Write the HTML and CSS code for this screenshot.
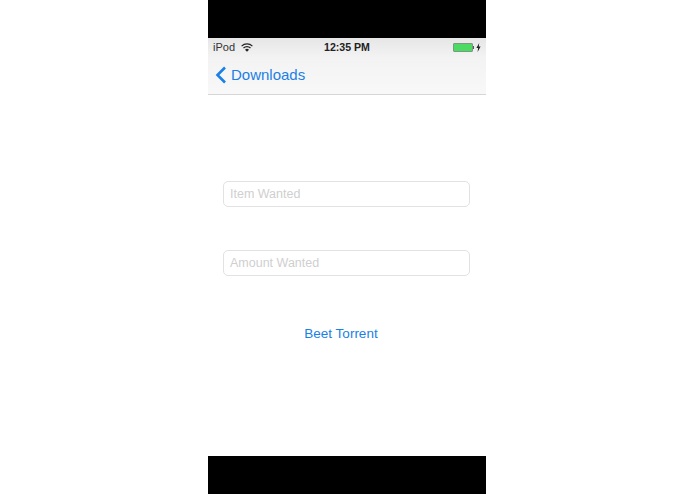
FILE: index.html
```html
<!DOCTYPE html>
<html lang="en">
<head>
  <meta charset="UTF-8" />
  <title>Beet Torrent</title>
  <link rel="stylesheet" href="styles.css">
</head>
<body>
  <div class="phone">
    <div class="letterbox"></div>
    <div class="screen">
      <div class="top-bar">
        <div class="status-bar">
          <div class="status-left">
            <span>iPod</span>
            <svg class="wifi" width="12" height="9" viewBox="0 0 12 9">
              <path d="M0.6 3.1 A7.6 7.6 0 0 1 11.4 3.1" fill="none" stroke="#222" stroke-width="1.2"/>
              <path d="M2.5 5 A4.9 4.9 0 0 1 9.5 5" fill="none" stroke="#222" stroke-width="1.2"/>
              <path d="M6 8.8 L4 6.7 A2.9 2.9 0 0 1 8 6.7 Z" fill="#222"/>
            </svg>
          </div>
          <div class="status-time">12:35 PM</div>
          <div class="status-right">
            <div class="battery"><div class="battery-fill"></div></div>
            <div class="battery-tip"></div>
            <svg class="bolt" width="5" height="9" viewBox="0 0 5 9">
              <path d="M3.2 0 L0.4 5 H2.1 L1.6 9 L4.6 3.6 H2.8 Z" fill="#222"/>
            </svg>
          </div>
        </div>
        <div class="nav-bar">
          <svg class="back-icon" width="12" height="18" viewBox="0 0 12 18">
            <path d="M10 1.5 L2.5 9 L10 16.5" fill="none" stroke="#1a7fe6" stroke-width="2.6"/>
          </svg>
          <span class="back-label">Downloads</span>
        </div>
      </div>
      <div class="content">
        <div class="field">Item Wanted</div>
        <div class="field">Amount Wanted</div>
        <div class="action">Beet Torrent</div>
      </div>
    </div>
    <div class="letterbox"></div>
  </div>
</body>
</html>
```

FILE: styles.css
```css
html, body {
  height: 100%;
}

body {
  margin: 0;
  background: white;
  font-family: "Liberation Sans", Arial, sans-serif;
  overflow: hidden;
}

.phone {
  width: 278px;
  height: 494px;
  margin-left: 208px;
  display: flex;
  flex-direction: column;
}

.letterbox {
  height: 38px;
  background: black;
}

.screen {
  flex: 1;
  background: white;
}

.top-bar {
  height: 57px;
  box-sizing: border-box;
  background: linear-gradient(#e6e6e6, #f3f3f3 35%, #f8f8f8);
  border-bottom: 1px solid #d6d6d6;
}

.status-bar {
  height: 18px;
  padding: 0 5px;
  display: flex;
  align-items: center;
  justify-content: space-between;
  position: relative;
  font-size: 11px;
  color: #333;
}

.status-left {
  display: flex;
  align-items: center;
  gap: 6px;
}

.status-time {
  position: absolute;
  left: 116px;
  font-size: 10.6px;
  font-weight: bold;
  color: #222;
}

.status-right {
  display: flex;
  align-items: center;
}

.battery {
  width: 20px;
  height: 9px;
  box-sizing: border-box;
  border: 1px solid #7a9a80;
  border-radius: 1px;
  background: white;
}

.battery-fill {
  height: 100%;
  background: #4cd964;
}

.battery-tip {
  width: 1px;
  height: 3px;
  background: #555;
  margin-right: 2px;
}

.nav-bar {
  height: 37px;
  padding-left: 7px;
  display: flex;
  align-items: center;
  gap: 4px;
}

.back-label {
  font-size: 15px;
  color: #1a7fe6;
}

.content {
  padding: 86px 16px 0 15px;
}

.field {
  height: 26px;
  box-sizing: border-box;
  margin-bottom: 43px;
  padding-left: 6px;
  border: 1px solid #e2e2e2;
  border-radius: 5px;
  background: white;
  font-size: 12.5px;
  line-height: 25px;
  color: #cfcfcf;
}

.action {
  width: 248px;
  margin: 50px 0 0 -6px;
  text-align: center;
  font-size: 13.5px;
  line-height: 16px;
  color: #1a7fe6;
}
```
